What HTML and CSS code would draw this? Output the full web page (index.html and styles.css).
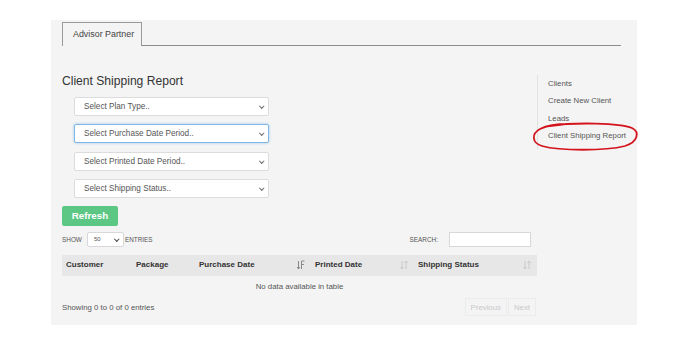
FILE: index.html
```html
<!DOCTYPE html>
<html lang="en">
<head>
  <meta charset="UTF-8">
  <title>Client Shipping Report</title>
  <link rel="stylesheet" href="styles.css">
</head>
<body>
  <div class="panel">
    <div class="tabs">
      <div class="tab">Advisor Partner</div>
    </div>

    <div class="content">
      <div class="main">
        <h1 class="title">Client Shipping Report</h1>

        <div class="filters">
          <div class="select">Select Plan Type..<span class="chev"></span></div>
          <div class="select focused">Select Purchase Date Period..<span class="chev"></span></div>
          <div class="select">Select Printed Date Period..<span class="chev"></span></div>
          <div class="select">Select Shipping Status..<span class="chev"></span></div>
        </div>

        <div class="btn-refresh">Refresh</div>

        <div class="table-tools">
          <div class="length">
            SHOW
            <div class="mini-select">50<span class="chev"></span></div>
            ENTRIES
          </div>
          <div class="search">
            SEARCH:
            <div class="search-input"></div>
          </div>
        </div>

        <div class="table">
          <div class="thead">
            <div class="th col1">Customer</div>
            <div class="th col2">Package</div>
            <div class="th col3">Purchase Date
              <svg class="sort on" width="8" height="10" viewBox="0 0 8 10"><path d="M1.5 1v8M0 7l1.5 2 1.5-2M4.5 1v8M4.5 1h3M4.5 4.5h2.4" fill="none" stroke="currentColor" stroke-width="1"/></svg>
            </div>
            <div class="th col4">Printed Date
              <svg class="sort" width="8" height="10" viewBox="0 0 8 10"><path d="M2 1v8M0.5 7l1.5 2 1.5-2M6 9V1M4.5 3l1.5-2 1.5 2" fill="none" stroke="currentColor" stroke-width="1"/></svg>
            </div>
            <div class="th col5">Shipping Status
              <svg class="sort" width="8" height="10" viewBox="0 0 8 10"><path d="M2 1v8M0.5 7l1.5 2 1.5-2M6 9V1M4.5 3l1.5-2 1.5 2" fill="none" stroke="currentColor" stroke-width="1"/></svg>
            </div>
          </div>
          <div class="empty">No data available in table</div>
        </div>

        <div class="table-foot">
          <div class="info">Showing 0 to 0 of 0 entries</div>
          <div class="pager">
            <span class="page-btn">Previous</span>
            <span class="page-btn">Next</span>
          </div>
        </div>
      </div>

      <ul class="side-menu">
        <li>Clients</li>
        <li>Create New Client</li>
        <li>Leads</li>
        <li>Client Shipping Report</li>
      </ul>
    </div>

    <svg class="circle-mark" width="110" height="34" viewBox="0 0 110 34">
      <path d="M20 6C45 2 90 3 102 8C110 12 108 22 95 26C75 31 30 31 12 26C2 23 1 14 10 9C16 6 28 4 38 4" fill="none" stroke="#d4141c" stroke-width="1.8" stroke-linecap="round"/>
    </svg>
  </div>
</body>
</html>
```

FILE: styles.css
```css
body {
  margin: 0;
  background: #fff;
  font-family: "Liberation Sans", Arial, sans-serif;
  color: #444;
}
.panel {
  position: relative;
  box-sizing: border-box;
  width: 586px;
  height: 305px;
  margin: 20px 0 0 51px;
  padding: 2px 16px 0 11px;
  background: #f4f4f4;
}
.tabs {
  display: flex;
  border-bottom: 1px solid #8c8c8c;
}
.tab {
  box-sizing: border-box;
  width: 80px;
  height: 24px;
  margin-bottom: -1px;
  padding-left: 10px;
  line-height: 23px;
  font-size: 8.9px;
  color: #444;
  background: #f4f4f4;
  border: 1px solid #9a9a9a;
  border-bottom: none;
}
.content {
  display: flex;
  margin-top: 28px;
}
.main {
  width: 475px;
}
.title {
  margin: 0;
  font-size: 12.1px;
  line-height: 14px;
  font-weight: normal;
  color: #333;
}
.filters {
  display: flex;
  flex-direction: column;
  gap: 8.4px;
  width: 195px;
  margin: 9px 0 0 12px;
}
.select {
  position: relative;
  box-sizing: border-box;
  height: 19px;
  padding-left: 9px;
  line-height: 17px;
  font-size: 8.2px;
  color: #555;
  background: #fff;
  border: 1px solid #dcdcdc;
  border-radius: 2px;
}
.select.focused {
  border-color: #7fb6e6;
  box-shadow: 0 0 3px rgba(102, 175, 233, 0.6);
}
.chev {
  position: absolute;
  right: 5px;
  top: 6px;
  width: 2.5px;
  height: 2.5px;
  border-right: 1px solid #666;
  border-bottom: 1px solid #666;
  transform: rotate(45deg);
}
.btn-refresh {
  width: 56px;
  height: 20px;
  margin-top: 8px;
  line-height: 20px;
  text-align: center;
  font-size: 9.8px;
  font-weight: bold;
  color: #fff;
  background: #5cc785;
  border-radius: 2px;
}
.table-tools {
  display: flex;
  justify-content: space-between;
  align-items: center;
  margin-top: 6px;
  padding-right: 6px;
  font-size: 6.4px;
  color: #555;
}
.length,
.search {
  display: flex;
  align-items: center;
}
.mini-select {
  position: relative;
  box-sizing: border-box;
  width: 37px;
  height: 15px;
  margin: 0 1px 0 5px;
  padding-left: 6px;
  line-height: 13px;
  font-size: 6px;
  background: #fff;
  border: 1px solid #d8d8d8;
  border-radius: 2px;
}
.mini-select .chev {
  top: 4px;
  right: 4px;
  border-color: #444;
}
.search-input {
  box-sizing: border-box;
  width: 82px;
  height: 15px;
  margin-left: 11px;
  background: #fff;
  border: 1px solid #d8d8d8;
}
.table {
  margin-top: 8px;
}
.thead {
  display: flex;
  box-sizing: border-box;
  height: 21px;
  padding-bottom: 2px;
  background: #e7e7e7;
  font-size: 8px;
  font-weight: bold;
  color: #333;
}
.th {
  display: flex;
  align-items: center;
  justify-content: space-between;
  box-sizing: border-box;
  padding: 0 6px 0 4px;
}
.col1 { width: 70px; }
.col2 { width: 63px; }
.col3 { width: 116px; }
.col4 { width: 103px; }
.col5 { width: 123px; }
.sort {
  color: #c8c8c8;
}
.sort.on {
  color: #8a8a8a;
}
.empty {
  height: 22px;
  line-height: 22px;
  text-align: center;
  font-size: 7.8px;
  color: #555;
}
.table-foot {
  display: flex;
  justify-content: space-between;
  align-items: center;
  margin-top: 0;
}
.info {
  font-size: 7.8px;
  color: #555;
}
.pager {
  display: flex;
  margin-right: 1px;
}
.page-btn {
  box-sizing: border-box;
  height: 18px;
  padding: 0 5px;
  line-height: 17px;
  font-size: 7.8px;
  color: #c9c9c9;
  border: 1px solid #ebebeb;
}
.page-btn + .page-btn {
  margin-left: 1px;
}
.side-menu {
  list-style: none;
  margin: 1px 0 0;
  padding: 0 0 4px 10px;
  align-self: flex-start;
  border-left: 1px solid #e2e2e2;
  font-size: 7.8px;
  color: #555;
}
.side-menu li {
  height: 17.4px;
  line-height: 17.4px;
  white-space: nowrap;
}
.circle-mark {
  position: absolute;
  left: 479px;
  top: 100px;
}
```
